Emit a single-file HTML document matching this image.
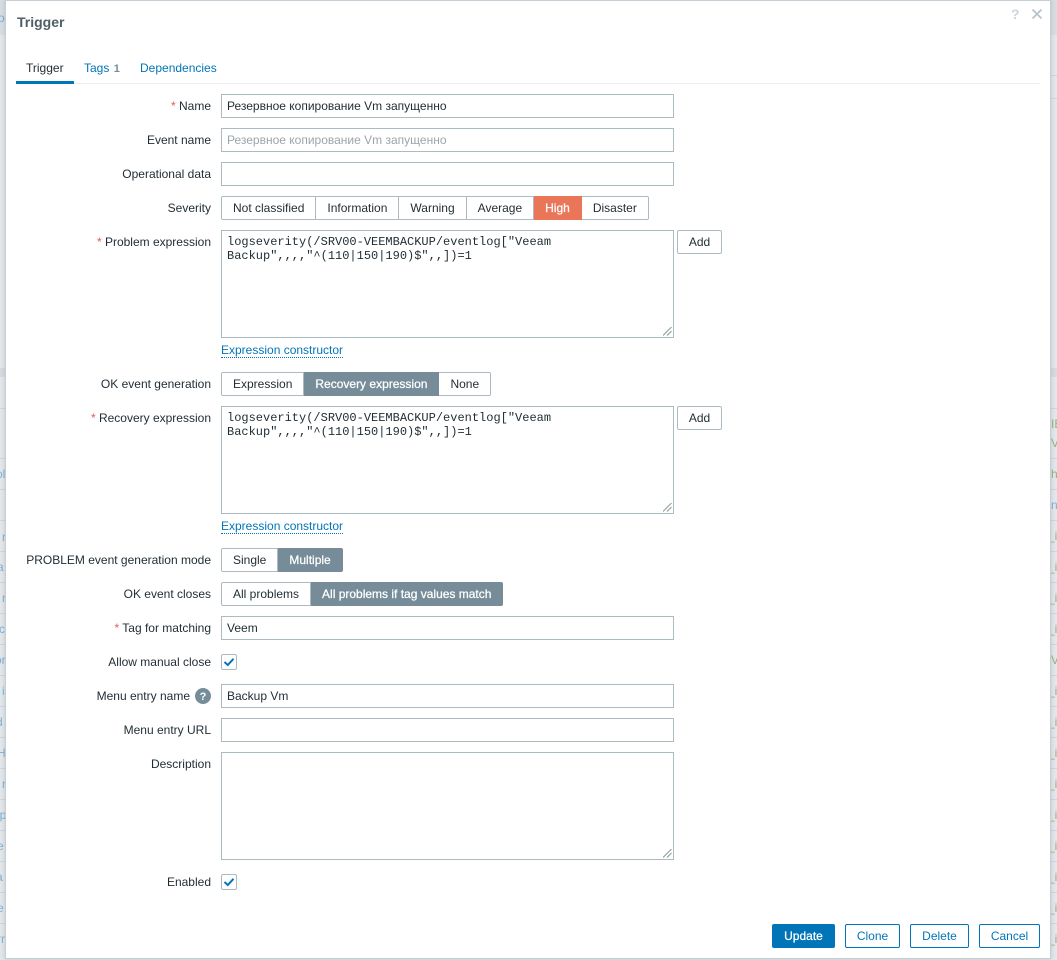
<!DOCTYPE html>
<html><head><meta charset="utf-8"><title>Trigger</title>
<style>
html,body{margin:0;padding:0}
body{width:1057px;height:960px;overflow:hidden;position:relative;background:#e3e7ea;font:12px "Liberation Sans",Arial,sans-serif;color:#1f2c33}
.a{position:absolute;white-space:nowrap}
#dlg{position:absolute;left:5px;top:0;width:1044px;height:957px;background:#fff;border:1px solid #c5ced4;box-shadow:0 0 4px rgba(80,100,110,.25)}
.l{position:absolute;right:846px;white-space:nowrap;line-height:14px;text-align:right}
.s{color:#e45959}
.i{position:absolute;left:221px;width:451px;height:22px;border:1px solid #acbbc2;background:#fff;line-height:22px;text-indent:5px;color:#1f2c33;border-radius:0}
.t{position:absolute;left:221px;width:451px;height:106px;border:1px solid #acbbc2;background:#fff}
.m{position:absolute;left:5px;top:4px;font:12px/14px "Liberation Mono","Courier New",monospace;color:#1f2c33;white-space:nowrap}
.g{position:absolute;left:221px;height:24px;display:flex}
.g span{display:block;height:22px;line-height:22px;border:1px solid #acbbc2;border-left-width:0;padding:0 11px;background:#fff;color:#1f2c33;white-space:nowrap}
.g span:first-child{border-left-width:1px;border-radius:2px 0 0 2px}
.g span:last-child{border-radius:0 2px 2px 0}
.g span.on{background:#768d99;border-color:#768d99;color:#fff;font-weight:normal;-webkit-text-stroke:.25px #fff}
.g span.hi{background:#e97659;border-color:#e97659;color:#fff;-webkit-text-stroke:.25px #fff}
.add{position:absolute;left:677px;width:43px;height:22px;line-height:22px;border:1px solid #acbbc2;border-radius:2px;text-align:center;background:#fff}
.lnk{position:absolute;left:221px;color:#0275b8;border-bottom:1px dotted #0275b8;line-height:13px;white-space:nowrap}
.cb{position:absolute;left:221px;width:14px;height:14px;border:1px solid #acbbc2;border-radius:2px;background:#fff}
.btn{position:absolute;top:924px;height:22px;line-height:22px;border:1px solid #0275b8;border-radius:2px;text-align:center;color:#0275b8;background:#fff}
.rz{position:absolute;right:1px;bottom:1px}
.r{position:absolute;height:1px;background:#cfd6da}
.bt{position:absolute;color:#5a9fd0;white-space:nowrap;opacity:.75}
.bg{position:absolute;color:#7fa860;white-space:nowrap;opacity:.8}
</style></head><body>
<div class="a" style="left:0;top:0;width:6px;height:35px;background:#d8dde1"></div>
<div class="a" style="left:1050px;top:0;width:7px;height:35px;background:#d8dde1"></div>
<div class="a" style="left:0;top:368px;width:6px;height:9px;background:#d6dbdf"></div>
<div class="a" style="left:1050px;top:368px;width:7px;height:9px;background:#d6dbdf"></div>
<div class="r" style="left:0;top:408px;width:6px"></div>
<div class="r" style="left:0;top:458px;width:6px"></div>
<div class="r" style="left:0;top:489px;width:6px"></div>
<div class="r" style="left:0;top:520px;width:6px"></div>
<div class="r" style="left:0;top:551px;width:6px"></div>
<div class="r" style="left:0;top:582px;width:6px"></div>
<div class="r" style="left:0;top:613px;width:6px"></div>
<div class="r" style="left:0;top:644px;width:6px"></div>
<div class="r" style="left:0;top:675px;width:6px"></div>
<div class="r" style="left:0;top:706px;width:6px"></div>
<div class="r" style="left:0;top:737px;width:6px"></div>
<div class="r" style="left:0;top:768px;width:6px"></div>
<div class="r" style="left:0;top:799px;width:6px"></div>
<div class="r" style="left:0;top:830px;width:6px"></div>
<div class="r" style="left:0;top:861px;width:6px"></div>
<div class="r" style="left:0;top:892px;width:6px"></div>
<div class="r" style="left:0;top:923px;width:6px"></div>
<div class="r" style="left:1050px;top:75px;width:7px"></div>
<div class="r" style="left:1050px;top:98px;width:7px"></div>
<div class="r" style="left:1050px;top:408px;width:7px"></div>
<div class="r" style="left:1050px;top:458px;width:7px"></div>
<div class="r" style="left:1050px;top:489px;width:7px"></div>
<div class="r" style="left:1050px;top:520px;width:7px"></div>
<div class="r" style="left:1050px;top:551px;width:7px"></div>
<div class="r" style="left:1050px;top:582px;width:7px"></div>
<div class="r" style="left:1050px;top:613px;width:7px"></div>
<div class="r" style="left:1050px;top:644px;width:7px"></div>
<div class="r" style="left:1050px;top:675px;width:7px"></div>
<div class="r" style="left:1050px;top:706px;width:7px"></div>
<div class="r" style="left:1050px;top:737px;width:7px"></div>
<div class="r" style="left:1050px;top:768px;width:7px"></div>
<div class="r" style="left:1050px;top:799px;width:7px"></div>
<div class="r" style="left:1050px;top:830px;width:7px"></div>
<div class="r" style="left:1050px;top:861px;width:7px"></div>
<div class="r" style="left:1050px;top:892px;width:7px"></div>
<div class="r" style="left:1050px;top:923px;width:7px"></div>
<span class="bt" style="left:-2px;top:11px">o</span>
<span class="bt" style="left:-4px;top:467px">ol</span>
<span class="bt" style="left:2px;top:530px">r</span>
<span class="bt" style="left:-3px;top:560px">a</span>
<span class="bt" style="left:2px;top:591px">r</span>
<span class="bt" style="left:-1px;top:622px">c</span>
<span class="bt" style="left:-5px;top:653px">or</span>
<span class="bt" style="left:2px;top:684px;color:#3fb4e8">i</span>
<span class="bt" style="left:-4px;top:715px">d</span>
<span class="bt" style="left:-3px;top:746px">Н</span>
<span class="bt" style="left:2px;top:777px">r</span>
<span class="bt" style="left:-3px;top:808px">ip</span>
<span class="bt" style="left:-3px;top:839px">e</span>
<span class="bt" style="left:-4px;top:870px">a</span>
<span class="bt" style="left:-3px;top:901px">e</span>
<span class="bt" style="left:-3px;top:932px">rr</span>
<span class="bg" style="left:1051px;top:417px">IE</span>
<span class="bg" style="left:1051px;top:436px">V</span>
<span class="bg" style="left:1051px;top:467px">h</span>
<span class="bt" style="left:1051px;top:498px">n</span>
<span class="bg" style="left:1048px;top:529px">_i</span>
<span class="bg" style="left:1048px;top:560px">_i</span>
<span class="bg" style="left:1048px;top:591px">_i</span>
<span class="bg" style="left:1048px;top:622px">_i</span>
<span class="bg" style="left:1051px;top:653px">V</span>
<span class="bg" style="left:1048px;top:684px">_i</span>
<span class="bg" style="left:1048px;top:715px">_i</span>
<span class="bg" style="left:1048px;top:746px">_i</span>
<span class="bg" style="left:1048px;top:777px">_i</span>
<span class="bg" style="left:1048px;top:808px">_i</span>
<span class="bg" style="left:1048px;top:839px">_i</span>
<span class="bg" style="left:1048px;top:870px">_i</span>
<span class="bg" style="left:1048px;top:901px">_i</span>
<span class="bg" style="left:1048px;top:932px">_i</span>

<div id="dlg"></div>

<div class="a" style="left:17px;top:14px;font-size:14px;line-height:17px;font-weight:bold;color:#4f5f69">Trigger</div>
<div class="a" style="left:1011px;top:6px;font-size:14px;line-height:16px;font-weight:bold;color:#ccd5da">?</div>
<svg class="a" style="left:1031px;top:8px" width="12" height="12" viewBox="0 0 12 12"><path d="M1.5 1.5L10.5 10.5M10.5 1.5L1.5 10.5" stroke="#b8c4ca" stroke-width="1.8" fill="none"/></svg>

<div class="a" style="left:26px;top:61px;line-height:14px">Trigger</div>
<div class="a" style="left:84px;top:61px;line-height:14px;color:#0275b8">Tags <span style="color:#768d99;font-size:11px;margin-left:1px;font-weight:bold">1</span></div>
<div class="a" style="left:140px;top:61px;line-height:14px;color:#0275b8">Dependencies</div>
<div class="a" style="left:16px;top:83px;width:1024px;height:1px;background:#ebeef0"></div>
<div class="a" style="left:16px;top:81px;width:58px;height:3px;background:#0275b8"></div>

<div class="l" style="top:99px"><span class="s">*</span> Name</div>
<div class="i" style="top:94px">Резервное копирование Vm запущенно</div>
<div class="l" style="top:133px">Event name</div>
<div class="i" style="top:128px;color:#9aa5ab">Резервное копирование Vm запущенно</div>
<div class="l" style="top:167px">Operational data</div>
<div class="i" style="top:162px"></div>
<div class="l" style="top:201px">Severity</div>
<div class="g" style="top:196px"><span>Not classified</span><span>Information</span><span>Warning</span><span>Average</span><span class="hi">High</span><span>Disaster</span></div>

<div class="l" style="top:235px"><span class="s">*</span> Problem expression</div>
<div class="t" style="top:230px"><div class="m">logseverity(/SRV00-VEEMBACKUP/eventlog["Veeam<br>Backup",,,,"^(110|150|190)$",,])=1</div>
<svg class="rz" width="9" height="9" viewBox="0 0 9 9"><path d="M0 8.5L8.5 0M4 8.5L8.5 4" stroke="#8a969d" stroke-width="1" fill="none"/></svg></div>
<div class="add" style="top:230px">Add</div>
<div class="lnk" style="top:344px">Expression constructor</div>

<div class="l" style="top:377px">OK event generation</div>
<div class="g" style="top:372px"><span>Expression</span><span class="on">Recovery expression</span><span>None</span></div>

<div class="l" style="top:411px"><span class="s">*</span> Recovery expression</div>
<div class="t" style="top:406px"><div class="m">logseverity(/SRV00-VEEMBACKUP/eventlog["Veeam<br>Backup",,,,"^(110|150|190)$",,])=1</div>
<svg class="rz" width="9" height="9" viewBox="0 0 9 9"><path d="M0 8.5L8.5 0M4 8.5L8.5 4" stroke="#8a969d" stroke-width="1" fill="none"/></svg></div>
<div class="add" style="top:406px">Add</div>
<div class="lnk" style="top:520px">Expression constructor</div>

<div class="l" style="top:553px">PROBLEM event generation mode</div>
<div class="g" style="top:548px"><span>Single</span><span class="on">Multiple</span></div>
<div class="l" style="top:587px">OK event closes</div>
<div class="g" style="top:582px"><span>All problems</span><span class="on">All problems if tag values match</span></div>
<div class="l" style="top:621px"><span class="s">*</span> Tag for matching</div>
<div class="i" style="top:616px">Veem</div>
<div class="l" style="top:655px">Allow manual close</div>
<div class="cb" style="top:654px"><svg width="14" height="14" viewBox="0 0 14 14" style="display:block"><path d="M2.5 7L5.8 10L11.5 3.8" stroke="#0275b8" stroke-width="2" fill="none"/></svg></div>
<div class="l" style="top:689px;right:867px">Menu entry name</div>
<svg class="a" style="left:195px;top:688px" width="16" height="16" viewBox="0 0 16 16"><circle cx="8" cy="8" r="8" fill="#768d99"/><text x="8" y="12" text-anchor="middle" font-family="Liberation Sans" font-weight="bold" font-size="11" fill="#fff">?</text></svg>
<div class="i" style="top:684px">Backup Vm</div>
<div class="l" style="top:723px">Menu entry URL</div>
<div class="i" style="top:718px"></div>
<div class="l" style="top:757px">Description</div>
<div class="t" style="top:752px"><svg class="rz" width="9" height="9" viewBox="0 0 9 9"><path d="M0 8.5L8.5 0M4 8.5L8.5 4" stroke="#8a969d" stroke-width="1" fill="none"/></svg></div>
<div class="l" style="top:875px">Enabled</div>
<div class="cb" style="top:874px"><svg width="14" height="14" viewBox="0 0 14 14" style="display:block"><path d="M2.5 7L5.8 10L11.5 3.8" stroke="#0275b8" stroke-width="2" fill="none"/></svg></div>

<div class="btn" style="left:772px;width:61px;background:#0275b8;color:#fff;-webkit-text-stroke:.25px #fff">Update</div>
<div class="btn" style="left:845px;width:53px">Clone</div>
<div class="btn" style="left:910px;width:57px">Delete</div>
<div class="btn" style="left:979px;width:59px">Cancel</div>
</body></html>
